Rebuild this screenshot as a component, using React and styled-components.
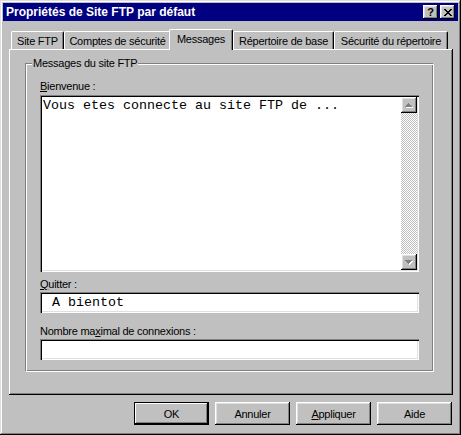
import React from "react";
import styled, { createGlobalStyle } from "styled-components";

const GlobalStyle = createGlobalStyle`
  html, body {
    margin: 0;
    padding: 0;
    background: #c0c0c0;
  }
  body {
    font-family: "Liberation Sans", Arial, sans-serif;
    font-size: 11px;
    letter-spacing: -0.25px;
    color: #000;
  }
`;

const raised = `
  box-shadow: inset -1px -1px #000, inset 1px 1px #fff,
    inset -2px -2px #808080, inset 2px 2px #dfdfdf;
`;

const sunken = `
  box-shadow: inset 1px 1px #808080, inset 2px 2px #000,
    inset -1px -1px #fff, inset -2px -2px #dfdfdf;
`;

const Window = styled.div`
  width: 461px;
  height: 435px;
  box-sizing: border-box;
  padding: 3px;
  background: #c0c0c0;
  box-shadow: inset -1px -1px #000, inset 1px 1px #dfdfdf,
    inset -2px -2px #808080, inset 2px 2px #fff;
  display: flex;
  flex-direction: column;
`;

const TitleBar = styled.div`
  height: 18px;
  background: #000080;
  color: #fff;
  display: flex;
  align-items: center;
  padding: 0 3px 0 3px;
`;

const TitleText = styled.div`
  flex: 1;
  font-weight: bold;
  font-size: 12px;
  letter-spacing: 0;
`;

const TitleButtons = styled.div`
  display: flex;
  gap: 2px;
`;

const TitleButton = styled.div`
  width: 15px;
  height: 14px;
  background: #c0c0c0;
  color: #000;
  ${raised}
  display: flex;
  align-items: center;
  justify-content: center;
  font-weight: bold;
  font-size: 11px;
  line-height: 1;
`;

const Body = styled.div`
  flex: 1;
  display: flex;
  flex-direction: column;
  padding: 8px 5px 0 6px;
`;

const TabRow = styled.div`
  display: flex;
  align-items: flex-end;
  height: 20px;
  padding-left: 2px;
  position: relative;
  z-index: 1;
`;

const Tab = styled.div`
  width: ${(p) => p.$width}px;
  height: ${(p) => (p.$active ? 21 : 18)}px;
  margin-left: ${(p) => (p.$active ? -2 : 0)}px;
  margin-bottom: ${(p) => (p.$active ? -1 : 0)}px;
  box-sizing: border-box;
  background: #c0c0c0;
  border-top: 1px solid #fff;
  border-left: 1px solid #fff;
  border-right: 1px solid #000;
  border-radius: 2px 2px 0 0;
  box-shadow: inset -1px 0 #808080;
  display: flex;
  align-items: center;
  justify-content: center;
  padding-bottom: ${(p) => (p.$active ? 2 : 0)}px;
  white-space: nowrap;
`;

const Panel = styled.div`
  height: 346px;
  box-sizing: border-box;
  padding: 8px 19px 0 16px;
  box-shadow: inset -1px -1px #000, inset 1px 1px #fff,
    inset -2px -2px #808080;
`;

const GroupBox = styled.fieldset`
  margin: 0;
  padding: 0;
  min-width: 0;
  border: 1px solid;
  border-color: #808080 #fff #fff #808080;
  box-shadow: inset 1px 1px #fff, inset -1px -1px #808080;
`;

const GroupTitle = styled.legend`
  margin-left: 6px;
  padding: 0 1px;
  line-height: 13px;
  background: #c0c0c0;
`;

const GroupInner = styled.div`
  display: flex;
  flex-direction: column;
  padding: 10px 14px 11px 14px;
`;

const Label = styled.div`
  line-height: 13px;
  margin-top: ${(p) => p.$top || 0}px;
  margin-bottom: ${(p) => p.$bottom || 1}px;
  white-space: nowrap;
`;

const Field = styled.div`
  height: ${(p) => p.$height}px;
  box-sizing: border-box;
  padding: 2px;
  background: #fff;
  ${sunken}
  display: flex;
`;

const MonoText = styled.div`
  flex: 1;
  font-family: "Liberation Mono", "Courier New", monospace;
  font-size: 13.33px;
  letter-spacing: 0;
  line-height: 15px;
  white-space: pre;
  padding: ${(p) => (p.$single ? "1px 2px" : "1px 1px")};
  align-self: ${(p) => (p.$single ? "center" : "stretch")};
`;

const ScrollBar = styled.div`
  width: 16px;
  display: flex;
  flex-direction: column;
`;

const ScrollTrack = styled.div`
  flex: 1;
  background: repeating-conic-gradient(#fff 0 25%, #c0c0c0 0 50%) 0 0 / 2px
    2px;
`;

const ScrollButton = styled.div`
  width: 16px;
  height: 16px;
  background: #c0c0c0;
  ${raised}
  display: flex;
  align-items: center;
  justify-content: center;
`;

const ButtonRow = styled.div`
  display: flex;
  justify-content: flex-end;
  gap: 6px;
  margin-top: 7px;
  padding-right: 1px;
`;

const Button = styled.div`
  width: 75px;
  height: 23px;
  background: #c0c0c0;
  display: flex;
  align-items: center;
  justify-content: center;
  box-shadow: ${(p) =>
    p.$default
      ? "inset 0 0 0 1px #000, inset -2px -2px #000, inset 2px 2px #fff, inset -3px -3px #808080"
      : "inset -1px -1px #000, inset 1px 1px #fff, inset -2px -2px #808080, inset 2px 2px #dfdfdf"};
`;

function Arrow({ down }) {
  const rows = [
    [3, 1],
    [2, 3],
    [1, 5],
    [0, 7],
  ];
  const list = down ? [...rows].reverse() : rows;
  return (
    <svg width="8" height="5" shapeRendering="crispEdges">
      {list.map(([x, w], i) => (
        <rect key={"w" + i} x={x + 1} y={i + 1} width={w} height="1" fill="#fff" />
      ))}
      {list.map(([x, w], i) => (
        <rect key={"g" + i} x={x} y={i} width={w} height="1" fill="#808080" />
      ))}
    </svg>
  );
}

function CloseGlyph() {
  return (
    <svg width="8" height="7" shapeRendering="crispEdges">
      {[0, 1, 2, 3, 4, 5, 6].map((i) => (
        <React.Fragment key={i}>
          <rect x={i} y={i} width="2" height="1" fill="#000" />
          <rect x={6 - i} y={i} width="2" height="1" fill="#000" />
        </React.Fragment>
      ))}
    </svg>
  );
}

const tabs = [
  { label: "Site FTP", width: 53 },
  { label: "Comptes de sécurité", width: 107 },
  { label: "Messages", width: 64, active: true },
  { label: "Répertoire de base", width: 101 },
  { label: "Sécurité du répertoire", width: 114 },
];

export default function App() {
  return (
    <>
      <GlobalStyle />
      <Window>
        <TitleBar>
          <TitleText>Propriétés de Site FTP par défaut</TitleText>
          <TitleButtons>
            <TitleButton>?</TitleButton>
            <TitleButton>
              <CloseGlyph />
            </TitleButton>
          </TitleButtons>
        </TitleBar>
        <Body>
          <TabRow>
            {tabs.map((t) => (
              <Tab key={t.label} $width={t.width} $active={t.active}>
                {t.label}
              </Tab>
            ))}
          </TabRow>
          <Panel>
            <GroupBox>
              <GroupTitle>Messages du site FTP</GroupTitle>
              <GroupInner>
                <Label $bottom={2}>
                  <u>B</u>ienvenue :
                </Label>
                <Field $height={177}>
                  <MonoText>Vous etes connecte au site FTP de ...</MonoText>
                  <ScrollBar>
                    <ScrollButton>
                      <Arrow />
                    </ScrollButton>
                    <ScrollTrack />
                    <ScrollButton>
                      <Arrow down />
                    </ScrollButton>
                  </ScrollBar>
                </Field>
                <Label $top={6}>
                  <u>Q</u>uitter :
                </Label>
                <Field $height={21}>
                  <MonoText $single> A bientot</MonoText>
                </Field>
                <Label $top={12}>
                  Nombre ma<u>x</u>imal de connexions :
                </Label>
                <Field $height={21} />
              </GroupInner>
            </GroupBox>
          </Panel>
          <ButtonRow>
            <Button $default>OK</Button>
            <Button>Annuler</Button>
            <Button>
              <span>
                <u>A</u>ppliquer
              </span>
            </Button>
            <Button>Aide</Button>
          </ButtonRow>
        </Body>
      </Window>
    </>
  );
}
